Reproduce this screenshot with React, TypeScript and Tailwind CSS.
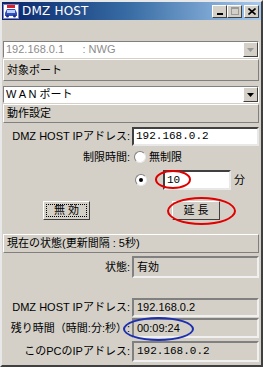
import React from "react";

const raised =
  "border border-t-white border-l-white border-r-[#404040] border-b-[#404040]";
const sunken =
  "border border-t-[#808080] border-l-[#808080] border-r-white border-b-white";

const DownArrow = ({ color }: { color: string }) => (
  <svg width="7" height="4" viewBox="0 0 7 4">
    <polygon points="0,0 7,0 3.5,4" fill={color} />
  </svg>
);

const Combo = ({ text, disabled }: { text: string; disabled?: boolean }) => (
  <div className={`flex h-[17px] bg-white ${sunken}`}>
    <div
      className={`flex-1 pl-[2px] flex items-center whitespace-pre ${
        disabled ? "text-[#8c8c8c]" : "text-black"
      }`}
    >
      {text}
    </div>
    <div
      className={`w-[15px] bg-[#d4d0c8] flex items-center justify-center ${raised}`}
    >
      <DownArrow color={disabled ? "#9a9a9a" : "#000"} />
    </div>
  </div>
);

const Panel = ({ label, h }: { label: string; h: string }) => (
  <div className={`${h} ${raised} border-r-[#808080] border-b-[#808080] flex items-center px-[3px]`}>
    {label}
  </div>
);

const Radio = ({ checked }: { checked?: boolean }) => (
  <div className="w-[12px] h-[12px] rounded-full bg-white border border-t-[#808080] border-l-[#808080] border-r-[#e8e8e8] border-b-[#e8e8e8] flex items-center justify-center">
    {checked && <div className="w-[4px] h-[4px] rounded-full bg-black" />}
  </div>
);

const Row = ({
  label,
  children,
  h,
  mt,
}: {
  label: string;
  children: React.ReactNode;
  h: string;
  mt: string;
}) => (
  <div className={`flex ${h} ${mt}`}>
    <div className="w-[128px] text-right pr-[1px] flex items-center justify-end whitespace-nowrap">
      {label}
    </div>
    {children}
  </div>
);

const StatusField = ({ value, mono }: { value: string; mono?: boolean }) => (
  <div
    className={`flex-1 ml-[1px] border-2 border-t-[#808080] border-l-[#808080] border-r-[#f0f0f0] border-b-[#f0f0f0] flex items-center pl-[3px] ${
      mono ? "font-['Liberation_Mono',monospace] text-[11px]" : ""
    }`}
  >
    {value}
  </div>
);

export default function App() {
  return (
    <div className="relative w-[263px] h-[367px] overflow-hidden bg-[#d4d0c8] border-2 border-t-[#e8e8e8] border-l-[#e8e8e8] border-r-[#404040] border-b-[#404040] text-[11px] text-black font-['Liberation_Sans','Noto_Sans_CJK_JP',sans-serif] leading-none">
      {/* title bar */}
      <div className="h-[18px] flex items-center bg-linear-to-r from-[#0a246a] via-[#3a6ea5] to-[#a6caf0] pl-[1px] pr-[2px]">
        <svg width="16" height="15" viewBox="0 0 16 15">
          <rect x="0.5" y="0.5" width="15" height="14" fill="#fff" stroke="#8080c0" />
          <rect x="4" y="1" width="8" height="3" fill="#e02020" />
          <path d="M2 9 L4 5 H12 L14 9 V12 H2 Z" fill="#3050c0" />
          <rect x="4" y="6" width="8" height="3" fill="#c0d0ff" />
          <circle cx="4.5" cy="12" r="1.5" fill="#203080" />
          <circle cx="11.5" cy="12" r="1.5" fill="#203080" />
        </svg>
        <span className="ml-[3px] text-white text-[12px] font-['DejaVu_Sans',sans-serif] tracking-[0.2px]">
          DMZ HOST
        </span>
        <div className="ml-auto flex items-center">
          <div className={`w-[15px] h-[13px] bg-[#d4d0c8] ${raised} flex items-end justify-center pb-[2px]`}>
            <div className="w-[6px] h-[2px] bg-black" />
          </div>
          <div className={`w-[15px] h-[13px] bg-[#d4d0c8] ${raised} flex items-center justify-center`}>
            <div className="w-[8px] h-[8px] border border-t-2 border-[#9a9a9a]" />
          </div>
          <div className={`ml-[2px] w-[15px] h-[13px] bg-[#d4d0c8] ${raised} flex items-center justify-center`}>
            <svg width="8" height="7" viewBox="0 0 8 7">
              <path d="M0.5 0.5 L7.5 6.5 M7.5 0.5 L0.5 6.5" stroke="#000" strokeWidth="1.6" />
            </svg>
          </div>
        </div>
      </div>

      <div className="pl-[1px] pr-[2px]">
        <div className="mt-[21px]">
          <Combo text={"192.168.0.1      : NWG"} disabled />
        </div>
        <div className="mt-[1px]">
          <Panel label="対象ポート" h="h-[22px]" />
        </div>
        <div className="mt-[5px]">
          <Combo text="W A N ポート" />
        </div>
        <div className="mt-[1px]">
          <Panel label="動作設定" h="h-[19px]" />
        </div>

        <Row label="DMZ HOST IPアドレス:" h="h-[19px]" mt="mt-[4px]">
          <div className="flex-1 ml-[1px] bg-white border-2 border-t-[#404040] border-l-[#404040] border-r-[#e8e8e8] border-b-[#e8e8e8] flex items-center pl-[2px] font-['Liberation_Mono',monospace] text-[11px]">
            192.168.0.2
          </div>
        </Row>

        <Row label="制限時間:" h="h-[16px]" mt="mt-[3px]">
          <div className="flex items-center ml-[3px] gap-[3px]">
            <Radio />
            <span>無制限</span>
          </div>
        </Row>

        <div className="flex h-[20px] mt-[5px] items-center">
          <div className="w-[132px]" />
          <Radio checked />
          <div className="ml-[16px] w-[68px] h-[20px] bg-white border-2 border-t-[#404040] border-l-[#404040] border-r-[#e8e8e8] border-b-[#e8e8e8] flex items-center pl-[2px] font-['Liberation_Mono',monospace] text-[11px]">
            10
          </div>
          <span className="ml-[3px]">分</span>
        </div>

        <div className="flex h-[19px] mt-[11px]">
          <div
            className={`ml-[40px] w-[47px] h-[19px] ${raised} p-[2px] flex`}
          >
            <div className="flex-1 border border-dotted border-black flex items-center justify-center tracking-[3px] pl-[3px]">
              無効
            </div>
          </div>
          <div
            className={`ml-[82px] w-[48px] h-[19px] ${raised} flex items-center justify-center tracking-[3px] pl-[3px]`}
          >
            延長
          </div>
        </div>

        <div className="mt-[14px]">
          <Panel label="現在の状態(更新間隔 : 5秒)" h="h-[19px]" />
        </div>

        <Row label="状態:" h="h-[22px]" mt="mt-[3px]">
          <StatusField value="有効" />
        </Row>
        <Row label="DMZ HOST IPアドレス:" h="h-[19px]" mt="mt-[20px]">
          <StatusField value="192.168.0.2" />
        </Row>
        <Row label="残り時間（時間:分:秒）:" h="h-[20px]" mt="mt-[1px]">
          <StatusField value="00:09:24" />
        </Row>
        <Row label="このPCのIPアドレス:" h="h-[21px]" mt="mt-[3px]">
          <StatusField value="192.168.0.2" mono />
        </Row>
      </div>

      {/* annotation ellipses */}
      <div className="absolute left-[153px] top-[168px] w-[36px] h-[19px] rounded-[50%] border-2 border-[#e00000]" />
      <div className="absolute left-[165px] top-[195px] w-[69px] h-[28px] rounded-[50%] border-2 border-[#e00000]" />
      <div className="absolute left-[121px] top-[315px] w-[71px] h-[24px] rounded-[50%] border-2 border-[#1c2fb0]" />
    </div>
  );
}
